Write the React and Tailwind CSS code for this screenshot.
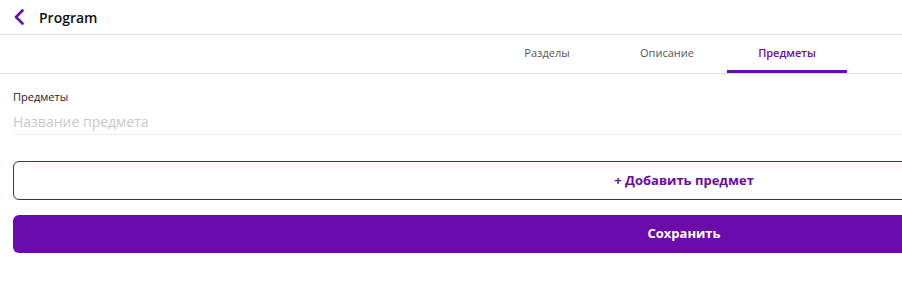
const TABS = ['Разделы', 'Описание', 'Предметы'];

export default function App() {
  const active = 'Предметы';

  return (
    <div className="w-full overflow-hidden bg-white" style={{ fontFamily: '"Open Sans", sans-serif' }}>
      <div className="w-[1368px] min-h-[281px]">

        {/* Header */}
        <header className="h-[35px] flex items-center pl-[13px] border-b border-[#eadcf2]">
          <svg width="12" height="16" viewBox="0 0 12 16" className="text-[#6a0bab]">
            <polyline points="9.5,1.5 3,8 9.5,14.5" fill="none" stroke="currentColor" strokeWidth="2.6" strokeLinecap="round" strokeLinejoin="round" />
          </svg>
          <span className="ml-[14px] text-[14px] font-semibold text-[#111]">Program</span>
        </header>

        {/* Tabs */}
        <nav className="h-[39px] flex pl-[487px] border-b border-[#dddddd]">
          {TABS.map((t) => (
            <div
              key={t}
              className={`w-[120px] flex items-center justify-center pt-[1px] text-[11px] border-b-[3px] ${
                t === active
                  ? 'text-[#6a0bab] font-semibold border-[#6a0bab]'
                  : 'text-[#555] border-transparent'
              }`}
            >
              {t}
            </div>
          ))}
        </nav>

        {/* Form */}
        <main className="px-[13px] pt-[15px]">
          <label className="block text-[11px] text-[#222] leading-[16px]">Предметы</label>
          <input
            placeholder="Название предмета"
            className="mt-[5px] w-full h-[25px] pb-[2px] text-[14px] text-[#222] placeholder-[#c9c9c9] border-b border-[#eeeeee] outline-none"
          />

          <button className="mt-[26px] w-full h-[39px] rounded-[6px] border border-[#6a0bab] text-[13px] font-bold text-[#6a0bab] flex items-center justify-center">
            + Добавить предмет
          </button>

          <button className="mt-[15px] w-full h-[38px] rounded-[6px] bg-[#6b0bab] text-[13px] font-bold text-white flex items-center justify-center">
            Сохранить
          </button>
        </main>
      </div>
    </div>
  );
}
